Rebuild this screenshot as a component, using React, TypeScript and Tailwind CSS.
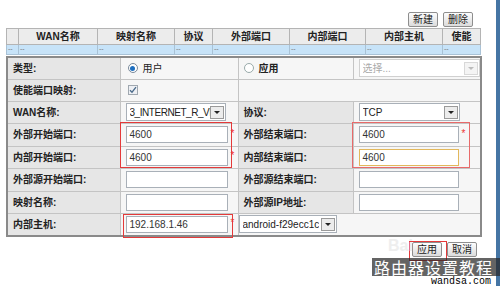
import React from "react";

const Inp = ({ v = "", w = "w-[102px]", cls = "border-[#a9b0b8]" }: { v?: string; w?: string; cls?: string }) => (
  <div className={`${w} h-[17px] border ${cls} bg-white text-[10px] leading-[15px] pl-[3px] text-[#333] overflow-hidden whitespace-nowrap`}>{v}</div>
);

const Arrow = ({ disabled = false }: { disabled?: boolean }) => (
  <div className={`w-[14px] h-[13px] shrink-0 border ${disabled ? "border-[#d8d8d8] bg-[#f4f4f4]" : "border-[#9a9a9a] bg-[#ececec]"} flex items-center justify-center mr-[1px]`}>
    <div className={`w-0 h-0 border-l-[3px] border-r-[3px] border-t-[3px] border-l-transparent border-r-transparent ${disabled ? "border-t-[#bbb]" : "border-t-[#222]"}`} />
  </div>
);

const Sel = ({ v, w, disabled = false, tight = false }: { v: string; w: string; disabled?: boolean; tight?: boolean }) => (
  <div className={`${w} h-[18px] border ${disabled ? "border-[#d0d0d0] text-[#aaa]" : "border-[#a9b0b8] text-[#222]"} bg-white flex items-center justify-between text-[10px] pl-[3px]`}>
    <span className={`overflow-hidden whitespace-nowrap ${tight ? "tracking-[-0.45px]" : ""}`}>{v}</span>
    <Arrow disabled={disabled} />
  </div>
);

const Star = () => <span className="text-[#e33] text-[10px] ml-[3px] leading-none -mt-[2px]">*</span>;

const L = ({ t, h }: { t: string; h: string }) => (
  <td className={`${h} bg-[#e6e6e6] border border-[#c4c4c4] pl-[5px] font-bold text-[10px] text-[#222] align-middle`}>{t}</td>
);
const V = ({ children, h, colSpan }: { children?: React.ReactNode; h: string; colSpan?: number }) => (
  <td colSpan={colSpan} className={`${h} bg-[#f6f6f6] border border-[#c4c4c4] align-middle`}>
    <div className="flex items-center pl-[5px]">{children}</div>
  </td>
);

const Btn = ({ t }: { t: string }) => (
  <div className="h-[15px] px-[4px] border border-[#8e8e8e] rounded-[2px] bg-gradient-to-b from-[#fdfdfd] to-[#dcdcdc] text-[10px] leading-[13px] text-[#222]">{t}</div>
);

export default function App() {
  const hd = ["", "WAN名称", "映射名称", "协议", "外部端口", "内部端口", "内部主机", "使能"];
  const hw = ["w-[12px]", "w-[79px]", "w-[77px]", "w-[38px]", "w-[77px]", "w-[76px]", "w-[77px]", "w-[38px]"];
  return (
    <div className="relative w-[500px] h-[286px] flex bg-white overflow-hidden font-['Liberation_Sans','Noto_Sans_CJK_SC',sans-serif]">
      <div className="w-[496px] h-full pl-[6px]">
        <div className="h-[28px] w-[474px] flex justify-end items-start pt-[12px] gap-[5px] pr-[7px]">
          <Btn t="新建" />
          <Btn t="删除" />
        </div>
        <table className="table-fixed border-collapse w-[474px] border border-[#9a9a9a]">
          <tbody>
            <tr className="h-[16px]">
              {hd.map((h, i) => (
                <td key={i} className={`${hw[i]} bg-[#ececec] border border-[#b4b4b4] text-center font-bold text-[10px] text-[#222]`}>{h}</td>
              ))}
            </tr>
            <tr className="h-[10px]">
              {hd.map((_, i) => (
                <td key={i} className="bg-[#c7e3f8] border border-[#a9c2d6] text-[7px] leading-[8px] text-[#777] pl-[1px] align-top">--</td>
              ))}
            </tr>
          </tbody>
        </table>
        <table className="table-fixed border-collapse w-[474px] border-2 border-[#8a8a8a] mt-[1px]">
          <colgroup>
            <col className="w-[113px]" />
            <col className="w-[118px]" />
            <col className="w-[115px]" />
            <col className="w-[128px]" />
          </colgroup>
          <tbody>
            <tr>
              <L t="类型:" h="h-[22px]" />
              <V h="h-[22px]">
                <div className="w-[10px] h-[10px] rounded-full border border-[#7a8a9a] bg-white flex items-center justify-center ml-[2px]">
                  <div className="w-[5px] h-[5px] rounded-full bg-[#1e6fc0]" />
                </div>
                <span className="text-[10px] text-[#222] ml-[5px]">用户</span>
              </V>
              <V h="h-[22px]">
                <div className="w-[10px] h-[10px] rounded-full border border-[#9aa] bg-white" />
                <span className="text-[10px] font-bold text-[#222] ml-[5px]">应用</span>
              </V>
              <V h="h-[22px]">
                <Sel v="选择..." w="w-[123px]" disabled />
              </V>
            </tr>
            <tr>
              <L t="使能端口映射:" h="h-[22px]" />
              <V h="h-[22px]">
                <div className="w-[10px] h-[10px] border border-[#a0a8b0] bg-[#eef0f4] flex items-center justify-center ml-[2px]">
                  <svg width="8" height="8" viewBox="0 0 8 8"><path d="M1 4.2 L3 6.2 L7 1.2" stroke="#4a6a8a" strokeWidth="1.3" fill="none" /></svg>
                </div>
              </V>
              <V h="h-[22px]" colSpan={2} />
            </tr>
            <tr>
              <L t="WAN名称:" h="h-[22px]" />
              <V h="h-[22px]">
                <Sel v="3_INTERNET_R_VI" w="w-[100px]" tight />
              </V>
              <L t="协议:" h="h-[22px]" />
              <V h="h-[22px]">
                <Sel v="TCP" w="w-[101px]" />
              </V>
            </tr>
            <tr>
              <L t="外部开始端口:" h="h-[23px]" />
              <V h="h-[23px]"><Inp v="4600" /><Star /></V>
              <L t="外部结束端口:" h="h-[23px]" />
              <V h="h-[23px]"><Inp v="4600" w="w-[100px]" /><Star /></V>
            </tr>
            <tr>
              <L t="内部开始端口:" h="h-[22px]" />
              <V h="h-[22px]"><Inp v="4600" /><Star /></V>
              <L t="内部结束端口:" h="h-[22px]" />
              <V h="h-[22px]"><Inp v="4600" w="w-[100px]" cls="border-[#e2b85c]" /></V>
            </tr>
            <tr>
              <L t="外部源开始端口:" h="h-[23px]" />
              <V h="h-[23px]"><Inp /></V>
              <L t="外部源结束端口:" h="h-[23px]" />
              <V h="h-[23px]"><Inp w="w-[100px]" /></V>
            </tr>
            <tr>
              <L t="映射名称:" h="h-[22px]" />
              <V h="h-[22px]"><Inp /></V>
              <L t="外部源IP地址:" h="h-[22px]" />
              <V h="h-[22px]"><Inp w="w-[100px]" /></V>
            </tr>
            <tr>
              <L t="内部主机:" h="h-[23px]" />
              <V h="h-[23px]"><Inp v="192.168.1.46" /><Star /></V>
              <td colSpan={2} className="h-[23px] bg-[#f6f6f6] border border-[#c4c4c4] align-middle">
                <div className="flex items-center pl-0">
                  <Sel v="android-f29ecc1c" w="w-[98px]" />
                </div>
              </td>
            </tr>
          </tbody>
        </table>
        <div className="w-[474px] flex justify-end gap-[5px] pr-[3px] mt-[5px]">
          <Btn t="应用" />
          <Btn t="取消" />
        </div>
      </div>
      <div className="w-[4px] h-full bg-[#4575a4]" />

      {/* annotation overlays */}
      <div className="absolute left-[120px] top-[122px] w-[112px] h-[46px] border border-[#e43a3a]" />
      <div className="absolute left-[352px] top-[122px] w-[118px] h-[46px] border border-[#e86a6a]" />
      <div className="absolute left-[123px] top-[214px] w-[110px] h-[24px] border border-[#e43a3a]" />
      <div className="absolute left-[409px] top-[241px] w-[38px] h-[20px] border border-[#e43a3a]" />
      <div className="absolute left-[388px] top-[234px] text-[16px] font-bold text-[#e4e4e4] opacity-60">Bai</div>
      <div className="absolute left-[372px] top-[258px] w-[128px] h-[18px] bg-[rgba(40,40,40,0.72)] flex items-center overflow-hidden">
        <span className="text-white text-[16px] leading-[18px] tracking-[1px] font-normal whitespace-nowrap font-['Noto_Sans_CJK_SC',sans-serif] ml-[2px]">路由器设置教程</span>
      </div>
      <div className="absolute left-[431px] top-[277px] text-[10px] leading-[9px] text-black font-['Liberation_Mono',monospace]">wandsa.com</div>
    </div>
  );
}
